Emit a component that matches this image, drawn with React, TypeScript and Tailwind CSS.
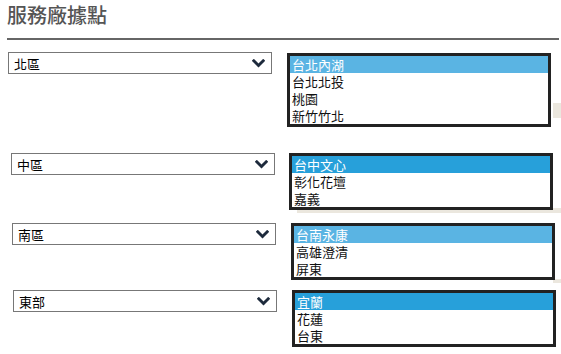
import React from "react";

type Region = {
  name: string;
  options: string[];
  hl: string;
  rowClass: string;
  selectShift: string;
  listShift: string;
};

const regions: Region[] = [
  {
    name: "北區",
    options: ["台北內湖", "台北北投", "桃園", "新竹竹北"],
    hl: "bg-[#5ab4e3]",
    rowClass: "mt-[12px]",
    selectShift: "ml-[1px]",
    listShift: "ml-[15px] mt-[1px]",
  },
  {
    name: "中區",
    options: ["台中文心", "彰化花壇", "嘉義"],
    hl: "bg-[#27a0da]",
    rowClass: "mt-[26px]",
    selectShift: "ml-[4px]",
    listShift: "ml-[14px]",
  },
  {
    name: "南區",
    options: ["台南永康", "高雄澄清", "屏東"],
    hl: "bg-[#5ab4e3]",
    rowClass: "mt-[13px]",
    selectShift: "ml-[5px]",
    listShift: "ml-[15px]",
  },
  {
    name: "東部",
    options: ["宜蘭", "花蓮", "台東"],
    hl: "bg-[#27a0da]",
    rowClass: "mt-[10px]",
    selectShift: "ml-[6px]",
    listShift: "ml-[15px]",
  },
];

function Chevron() {
  return (
    <svg width="13" height="9" viewBox="0 0 13 9" className="shrink-0">
      <polyline
        points="1.8,1.8 6.5,6.6 11.2,1.8"
        fill="none"
        stroke="#1d2a3c"
        strokeWidth="2.8"
        strokeLinecap="square"
      />
    </svg>
  );
}

function RegionRow({ r }: { r: Region }) {
  return (
    <div className={`relative z-10 flex items-start ${r.rowClass}`}>
      <div
        className={`${r.selectShift} w-[264px] h-[22px] border border-[#777] bg-white flex items-center justify-between pl-[5px] pr-[6px] text-[13px] text-black`}
      >
        <span className="leading-none">{r.name}</span>
        <Chevron />
      </div>
      <div className={`${r.listShift} w-[264px] border-[3px] border-[#222] bg-white`}>
        {r.options.map((o, i) => (
          <div
            key={o}
            className={`h-[17px] pl-[2px] flex items-center overflow-hidden text-[13px] leading-none ${
              i === 0 ? `${r.hl} text-white` : "text-[#111]"
            }`}
          >
            {o}
          </div>
        ))}
      </div>
    </div>
  );
}

export default function App() {
  return (
    <div
      className="relative w-[561px] h-[354px] bg-white overflow-hidden pl-[7px]"
      style={{ fontFamily: '"Noto Sans CJK TC", "Noto Sans", sans-serif' }}
    >
      {/* faint map backdrop peeking out behind the lists */}
      <div className="absolute left-[553px] top-[103px] w-[8px] h-[15px] bg-[#ebe7de]" />
      <div className="absolute left-[297px] top-[208px] w-[264px] h-[5px] bg-[#ebe7de]" />
      <div className="absolute left-[553px] top-[279px] w-[8px] h-[4px] bg-[#ebe7de]" />

      {/* Heading */}
      <h1 className="pt-[3px] h-[38px] text-[20px] leading-[24px] text-[#555] font-medium">
        服務廠據點
      </h1>
      <div className="h-[2px] w-[552px] bg-[#666]" />

      {/* Regions */}
      {regions.map((r) => (
        <RegionRow key={r.name} r={r} />
      ))}
    </div>
  );
}
